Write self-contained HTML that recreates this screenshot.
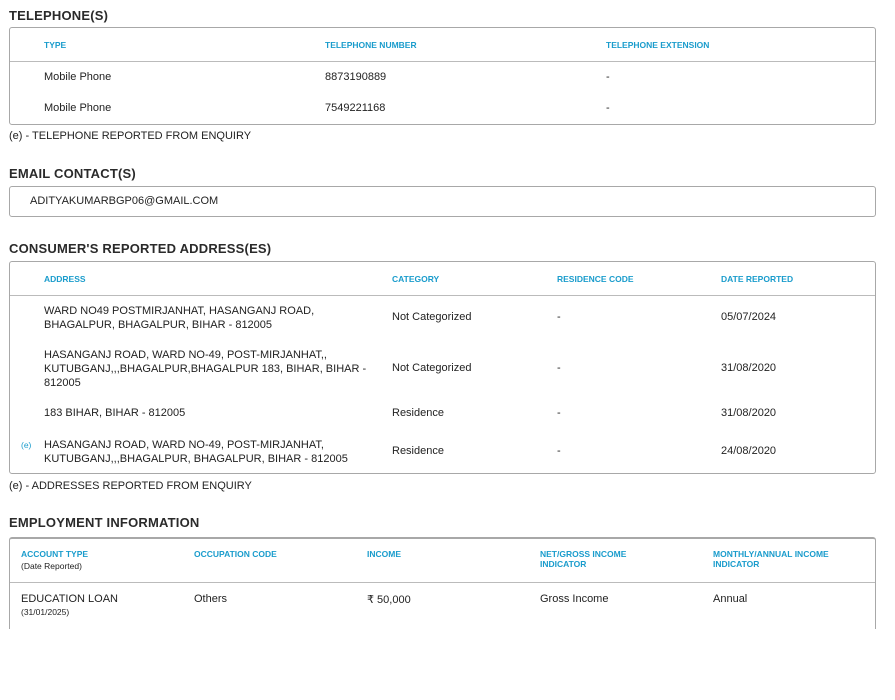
<!DOCTYPE html>
<html><head><meta charset="utf-8"><style>
body{margin:0;width:895px;height:700px;background:#fff;font-family:"Liberation Sans",sans-serif;color:#222;position:relative;overflow:hidden}
.a{position:absolute;white-space:nowrap;margin-top:1px}
.t{font-size:13px;font-weight:bold;color:#2a2a2a;letter-spacing:.2px}
.h{font-size:8.5px;font-weight:bold;color:#1a9ccc}
.d{font-size:11px;color:#222}
.s{font-size:8.5px;color:#222}
.box{position:absolute;border:1px solid #a8a8a8;border-radius:3px}
.line{position:absolute;height:1px;background:#bbb}
</style></head><body>
<div class="a t" style="left:9px;top:7px">TELEPHONE(S)</div>
<div class="box" style="left:9px;top:27px;width:865px;height:96px"></div>
<div class="line" style="left:10px;top:61px;width:865px"></div>
<div class="a h" style="left:44px;top:39px">TYPE</div>
<div class="a h" style="left:325px;top:39px">TELEPHONE NUMBER</div>
<div class="a h" style="left:606px;top:39px">TELEPHONE EXTENSION</div>
<div class="a d" style="left:44px;top:70px">Mobile Phone</div>
<div class="a d" style="left:325px;top:70px">8873190889</div>
<div class="a d" style="left:606px;top:70px">-</div>
<div class="a d" style="left:44px;top:101px">Mobile Phone</div>
<div class="a d" style="left:325px;top:101px">7549221168</div>
<div class="a d" style="left:606px;top:101px">-</div>
<div class="a d" style="left:9px;top:129px">(e) - TELEPHONE REPORTED FROM ENQUIRY</div>

<div class="a t" style="left:9px;top:165px">EMAIL CONTACT(S)</div>
<div class="box" style="left:9px;top:186px;width:865px;height:29px"></div>
<div class="a d" style="left:30px;top:194px">ADITYAKUMARBGP06@GMAIL.COM</div>

<div class="a t" style="left:9px;top:240px">CONSUMER'S REPORTED ADDRESS(ES)</div>
<div class="box" style="left:9px;top:261px;width:865px;height:211px"></div>
<div class="line" style="left:10px;top:295px;width:865px"></div>
<div class="a h" style="left:44px;top:273px">ADDRESS</div>
<div class="a h" style="left:392px;top:273px">CATEGORY</div>
<div class="a h" style="left:557px;top:273px">RESIDENCE CODE</div>
<div class="a h" style="left:721px;top:273px">DATE REPORTED</div>
<div class="a d" style="left:44px;top:303px;line-height:14px">WARD NO49 POSTMIRJANHAT, HASANGANJ ROAD,<br>BHAGALPUR, BHAGALPUR, BIHAR - 812005</div>
<div class="a d" style="left:392px;top:310px">Not Categorized</div>
<div class="a d" style="left:557px;top:310px">-</div>
<div class="a d" style="left:721px;top:310px">05/07/2024</div>
<div class="a d" style="left:44px;top:347px;line-height:14px">HASANGANJ ROAD, WARD NO-49, POST-MIRJANHAT,,<br>KUTUBGANJ,,,BHAGALPUR,BHAGALPUR 183, BIHAR, BIHAR -<br>812005</div>
<div class="a d" style="left:392px;top:361px">Not Categorized</div>
<div class="a d" style="left:557px;top:361px">-</div>
<div class="a d" style="left:721px;top:361px">31/08/2020</div>
<div class="a d" style="left:44px;top:406px">183 BIHAR, BIHAR - 812005</div>
<div class="a d" style="left:392px;top:406px">Residence</div>
<div class="a d" style="left:557px;top:406px">-</div>
<div class="a d" style="left:721px;top:406px">31/08/2020</div>
<div class="a h" style="left:21px;top:439px;font-weight:normal">(e)</div>
<div class="a d" style="left:44px;top:437px;line-height:14px">HASANGANJ ROAD, WARD NO-49, POST-MIRJANHAT,<br>KUTUBGANJ,,,BHAGALPUR, BHAGALPUR, BIHAR - 812005</div>
<div class="a d" style="left:392px;top:444px">Residence</div>
<div class="a d" style="left:557px;top:444px">-</div>
<div class="a d" style="left:721px;top:444px">24/08/2020</div>
<div class="a d" style="left:9px;top:479px">(e) - ADDRESSES REPORTED FROM ENQUIRY</div>

<div class="a t" style="left:9px;top:514px">EMPLOYMENT INFORMATION</div>
<div class="box" style="left:9px;top:537px;width:865px;height:100px;border-bottom:none;border-top-width:2px"></div>
<div style="position:absolute;left:0;top:629px;width:895px;height:71px;background:#fff"></div>
<div class="line" style="left:10px;top:582px;width:865px"></div>
<div class="a h" style="left:21px;top:548px">ACCOUNT TYPE</div>
<div class="a s" style="left:21px;top:560px">(Date Reported)</div>
<div class="a h" style="left:194px;top:548px">OCCUPATION CODE</div>
<div class="a h" style="left:367px;top:548px">INCOME</div>
<div class="a h" style="left:540px;top:548px;line-height:10px">NET/GROSS INCOME<br>INDICATOR</div>
<div class="a h" style="left:713px;top:548px;line-height:10px">MONTHLY/ANNUAL INCOME<br>INDICATOR</div>
<div class="a d" style="left:21px;top:592px">EDUCATION LOAN</div>
<div class="a s" style="left:21px;top:606px">(31/01/2025)</div>
<div class="a d" style="left:194px;top:592px">Others</div>
<div class="a d" style="left:367px;top:592px">₹ 50,000</div>
<div class="a d" style="left:540px;top:592px">Gross Income</div>
<div class="a d" style="left:713px;top:592px">Annual</div>
</body></html>
